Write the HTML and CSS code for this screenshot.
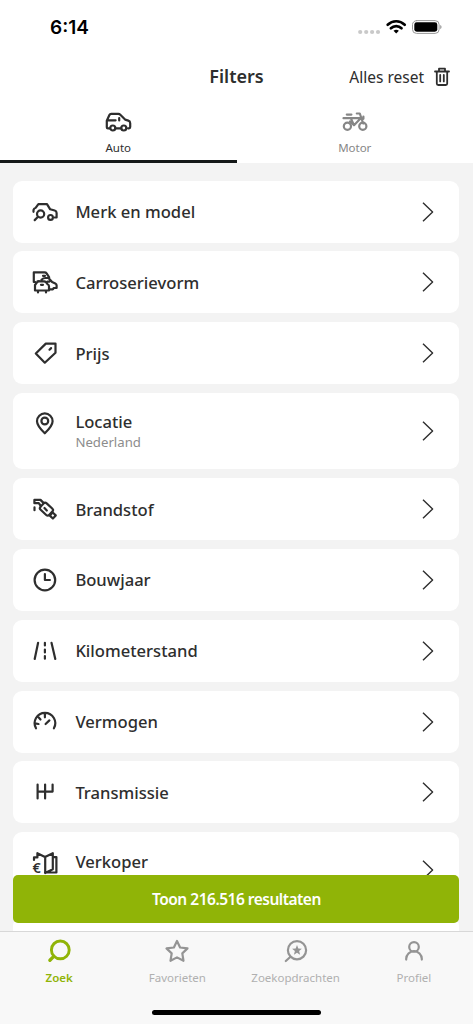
FILE: index.html
```html
<!DOCTYPE html>
<html lang="nl">
<head>
    <meta charset="UTF-8">
    <meta name="viewport" content="width=device-width, initial-scale=1.0">
    <title>Filters</title>
    <link rel="stylesheet" href="styles.css">
</head>
<body>
    <div class="app">
        <header class="header">
            <!-- Statusbalk -->
            <div class="status-bar">
                <span class="time">6:14</span>
                <svg class="status-icons" width="86" height="20" viewBox="0 0 86 20">
                    <g fill="#c9c9c9"><circle cx="4.2" cy="14" r="2.1"/><circle cx="10.2" cy="14" r="2.1"/><circle cx="16.1" cy="14" r="2.1"/><circle cx="22" cy="14" r="2.1"/></g>
                    <g fill="none" stroke="#000" stroke-width="2.7"><path d="M31.7 6.7a12.2 12.2 0 0 1 17 0"/><path d="M34.9 10.2a7.6 7.6 0 0 1 10.6 0"/></g>
                    <path d="M37.5 12.8a4.3 4.3 0 0 1 5.4 0L40.2 15.6z" fill="#000"/>
                    <rect x="56.5" y="2.6" width="26.6" height="12.8" rx="4" fill="none" stroke="#999" stroke-width="1"/>
                    <rect x="58.3" y="4.3" width="23" height="9.4" rx="2.4" fill="#000"/>
                    <path d="M84.3 7v4.2c1.6-.7 1.6-3.5 0-4.2z" fill="#888"/>
                </svg>
            </div>

            <div class="title-bar">
                <h1>Filters</h1>
                <button class="reset">
                    <span>Alles reset</span>
                    <svg width="16" height="20" viewBox="0 0 16 20"><path d="M1 4.5h14M5 4V1.7h6V4M2.8 5v11.6q0 1.4 1.4 1.4h7.6q1.4 0 1.4-1.4V5M6.2 8v6.4M9.8 8v6.4"/></svg>
                </button>
            </div>

            <nav class="vehicle-tabs">
                <a class="vehicle-tab active">
                    <svg width="28" height="22" viewBox="0 0 28 22"><path d="M6 17.3H3.9q-1.1 0-1.1-1.1V9.8L5.4 4q.5-1.1 1.8-1.1h7.2q1.1 0 1.9.8l4.8 4.9 3.2 1q1.9.6 1.9 2.6v3.9q0 1.2-1.2 1.2h-1M11.5 17.3h5.7M3.4 9.3h8.2M15.2 7v2.5"/><circle cx="8.8" cy="17" r="2.5"/><circle cx="19.8" cy="17" r="2.5"/></svg>
                    <span>Auto</span>
                </a>
                <a class="vehicle-tab">
                    <svg width="28" height="22" viewBox="0 0 28 22"><path d="M2.5 7.2h16.5M5.8 3.6h4.6M10 7.6l3 6.6 6-6.3M9 10.5l4 3.7M15.8 2.5h3l3.4 10M22.4 5.6v2.2"/><circle cx="6.4" cy="15.3" r="3.6"/><circle cx="21.8" cy="15.3" r="3.6"/></svg>
                    <span>Motor</span>
                </a>
            </nav>
        </header>

        <!-- Lijst met filters -->
        <main class="filters">
            <a class="card">
                <svg class="icon" viewBox="0 0 28 28"><path d="M2.5 13.8V12q.3-1.8 2.3-2.3L7.4 6.1H16l3.2 5.2 4.5 1.2q1.9.6 1.9 2.6v4.4h-2M7 18.8l-3.3 3.3"/><circle cx="9.6" cy="16" r="3.6"/><circle cx="19.5" cy="19.4" r="2.4"/></svg>
                <div class="text"><h2>Merk en model</h2></div>
                <svg class="chevron" viewBox="0 0 12 20"><path d="M1 .7 10.6 10 1 19.3"/></svg>
            </a>
            <a class="card">
                <svg class="icon" viewBox="0 0 28 28"><path d="M4.2 14H2.8V4.4h10.8q1.3 0 2 1l2.6 4M6.5 13.4l1.7-.4M10.5 11.8q1.8-1.8 4-1.8h3l3.6 4 3.2 1.4q1.3.6 1.3 1.9V20h-2.8l-1 1.4h-2.5M4 17l2-2.7q.7-1 1.9-1h5.2q1 0 1.8.8l1.6 2.1q1.5.5 1.5 2v4.3H4zM7 22.8v1.6M15 22.8v1.6M12 7.8h2M10 16.8h2M16.5 13.7h1.8"/></svg>
                <div class="text"><h2>Carroserievorm</h2></div>
                <svg class="chevron" viewBox="0 0 12 20"><path d="M1 .7 10.6 10 1 19.3"/></svg>
            </a>
            <a class="card">
                <svg class="icon" viewBox="0 0 28 28"><path d="M14.8 4.6h9.7v9.2L13.8 23.7l-9-9.2zM18.5 10.7l1.6-1.6"/></svg>
                <div class="text"><h2>Prijs</h2></div>
                <svg class="chevron" viewBox="0 0 12 20"><path d="M1 .7 10.6 10 1 19.3"/></svg>
            </a>
            <a class="card large">
                <svg class="icon" viewBox="0 0 28 28"><path d="M13.8 24.3C9.8 20.4 6 16.7 6 12.2a7.8 7.8 0 0 1 15.6 0c0 4.5-3.8 8.2-7.8 12.1z"/><circle cx="13.8" cy="12" r="3.4"/></svg>
                <div class="text"><h2>Locatie</h2><p>Nederland</p></div>
                <svg class="chevron" viewBox="0 0 12 20"><path d="M1 .7 10.6 10 1 19.3"/></svg>
            </a>
            <a class="card">
                <svg class="icon" viewBox="0 0 28 28"><path d="M3.4 8.2V4.9h6.1l3 3M3.6 8.2h4.2l2 2.8M3.5 12.4v2.8M13.5 13l2.3 2.5"/><rect x="9.5" y="9.6" width="12" height="8.8" rx="2.2" transform="rotate(43 15.3 14)"/><rect x="19.7" y="18.4" width="4.2" height="4.2" transform="rotate(43 21.8 20.5)"/></svg>
                <div class="text"><h2>Brandstof</h2></div>
                <svg class="chevron" viewBox="0 0 12 20"><path d="M1 .7 10.6 10 1 19.3"/></svg>
            </a>
            <a class="card">
                <svg class="icon" viewBox="0 0 28 28"><circle cx="13.9" cy="14" r="10.3"/><path d="M13.9 8v6h5"/></svg>
                <div class="text"><h2>Bouwjaar</h2></div>
                <svg class="chevron" viewBox="0 0 12 20"><path d="M1 .7 10.6 10 1 19.3"/></svg>
            </a>
            <a class="card">
                <svg class="icon" viewBox="0 0 28 28"><path d="M7.1 5.8 3.7 21.9M20.5 5.8l3.8 16.1M13.9 5.8v2.6M13.9 12.6v2.8M13.9 19v2.7"/></svg>
                <div class="text"><h2>Kilometerstand</h2></div>
                <svg class="chevron" viewBox="0 0 12 20"><path d="M1 .7 10.6 10 1 19.3"/></svg>
            </a>
            <a class="card">
                <svg class="icon" viewBox="0 0 28 28"><path d="M5 20.3a10.3 10.3 0 1 1 17.9 0M13.9 6v3.3M7.5 9.3l2 2.2M4 15.4l3.5.6M14.6 16l3.8-3.6"/></svg>
                <div class="text"><h2>Vermogen</h2></div>
                <svg class="chevron" viewBox="0 0 12 20"><path d="M1 .7 10.6 10 1 19.3"/></svg>
            </a>
            <a class="card">
                <svg class="icon" viewBox="0 0 28 28"><path d="M6.6 6.6v13.8M14.1 6.6v13.8M21.6 6.6v7H6.6"/></svg>
                <div class="text"><h2>Transmissie</h2></div>
                <svg class="chevron" viewBox="0 0 12 20"><path d="M1 .7 10.6 10 1 19.3"/></svg>
            </a>
            <a class="card large">
                <svg class="icon" viewBox="0 0 28 28"><path d="M3 11V8.4h3.4V4.2L14 8l7.8-3.8v16L14.2 24V8M22 8.1h3.4v15.4H14"/><text x="1.6" y="23.6">€</text></svg>
                <div class="text"><h2>Verkoper</h2></div>
                <svg class="chevron" viewBox="0 0 12 20"><path d="M1 .7 10.6 10 1 19.3"/></svg>
            </a>
            <a class="card"></a>
            <button class="show-results">Toon 216.516 resultaten</button>
        </main>

        <!-- Navigatie onderaan -->
        <footer class="bottom">
            <nav class="bottom-nav">
                <a class="nav-item active">
                    <svg width="28" height="28" viewBox="0 0 28 28"><circle cx="15.3" cy="12.9" r="8.9" stroke-width="2.9"/><path d="m8.8 19.4-3.9 3.8" stroke-width="3.4"/></svg>
                    <span>Zoek</span>
                </a>
                <a class="nav-item">
                    <svg width="28" height="28" viewBox="0 0 28 28"><path d="m14 4 3.1 6.5 7.4.9-5.2 5 1.2 7.4L14 20.4l-6.5 3.4 1.2-7.4-5.2-5 7.4-.9z"/></svg>
                    <span>Favorieten</span>
                </a>
                <a class="nav-item">
                    <svg width="28" height="28" viewBox="0 0 28 28"><circle cx="15" cy="13.2" r="9.1"/><path d="m8.5 19.7-4.7 4.3"/><path d="m15 8.1 1.3 3.5 3.6.2-2.8 2.3 1 3.6-3.1-2-3.1 2 1-3.6-2.8-2.3 3.6-.2z" fill="#949494" stroke="none"/></svg>
                    <span>Zoekopdrachten</span>
                </a>
                <a class="nav-item">
                    <svg width="28" height="28" viewBox="0 0 28 28"><circle cx="14" cy="9.9" r="4.8"/><path d="M6.2 22.6v-.8a7.8 7.6 0 0 1 15.6 0v.8"/></svg>
                    <span>Profiel</span>
                </a>
            </nav>
            <div class="home-indicator"></div>
        </footer>
    </div>
</body>
</html>
```
FILE: styles.css
```css
* {
    box-sizing: border-box;
}

body {
    margin: 0;
    font-family: 'Noto Sans', 'Open Sans', sans-serif;
    background-color: #f3f3f3;
    color: #2e2e2e;
}

h1, h2, p {
    margin: 0;
}

button {
    border: 0;
    padding: 0;
    background: none;
    font-family: inherit;
    color: inherit;
}

svg {
    display: block;
    flex: none;
    fill: none;
    stroke: currentColor;
    stroke-width: 2.2;
    stroke-linecap: round;
    stroke-linejoin: round;
}

.app {
    display: flex;
    flex-direction: column;
    width: 473px;
    height: 1024px;
    overflow: hidden;
}

/* Bovenkant */
.header {
    flex: none;
    height: 163px;
    background-color: #fff;
}

.status-bar {
    display: flex;
    justify-content: space-between;
    align-items: center;
    height: 54px;
    padding: 0 31px 0 50px;
}

.time {
    font-family: 'Inter', sans-serif;
    font-size: 19px;
    font-weight: 600;
    color: #000;
}

.status-icons {
    stroke: none;
    margin-top: 2px;
}

.title-bar {
    display: grid;
    grid-template-columns: 1fr auto 1fr;
    align-items: center;
    height: 45px;
    padding: 0 23px;
}

h1 {
    grid-column: 2;
    padding-bottom: 1px;
    font-size: 18px;
    font-weight: 600;
}

.reset {
    display: flex;
    justify-content: flex-end;
    align-items: center;
    gap: 10px;
    font-size: 15.5px;
}

.reset svg {
    stroke-width: 1.8;
}

.vehicle-tabs {
    display: flex;
    height: 64px;
}

.vehicle-tab {
    flex: 1;
    display: flex;
    flex-direction: column;
    align-items: center;
    gap: 7px;
    padding-top: 12px;
    border-bottom: 3px solid transparent;
    font-size: 11.5px;
    line-height: 16px;
    color: #868686;
}

.vehicle-tab.active {
    border-bottom-color: #141818;
    color: #2e2e2e;
}

/* Filters */
.filters {
    position: relative;
    flex: 1;
    min-height: 0;
    display: flex;
    flex-direction: column;
    gap: 8.8px;
    padding: 17.6px 13.6px 0 13.4px;
    overflow: hidden;
}

.card {
    flex: none;
    display: flex;
    align-items: center;
    height: 62px;
    padding: 0 25.6px 0 17.2px;
    border-radius: 9px;
    background-color: #fff;
}

.card.large {
    height: 76.4px;
}

.icon {
    width: 28px;
    height: 28px;
    margin-right: 16.8px;
}

.icon text {
    font-family: 'Noto Sans', sans-serif;
    font-size: 14.5px;
    font-weight: 600;
    fill: currentColor;
    stroke: none;
}

.card.large .icon,
.card.large .text {
    align-self: flex-start;
    margin-top: 16.4px;
}

.text {
    flex: 1;
}

h2 {
    font-size: 16.6px;
    font-weight: 500;
    line-height: 25px;
}

p {
    font-size: 13.2px;
    line-height: 16px;
    color: #8c8c8c;
}

.chevron {
    width: 12px;
    height: 20px;
    stroke-width: 1.4;
    stroke-linecap: butt;
}

/* Knop boven de lijst */
.show-results {
    position: absolute;
    left: 13.4px;
    right: 13.6px;
    bottom: 8px;
    height: 48.5px;
    border-radius: 5px;
    background-color: #90b407;
    color: #fff;
    font-size: 15.5px;
    font-weight: 600;
    letter-spacing: -0.5px;
}

/* Onderbalk */
.bottom {
    flex: none;
    display: flex;
    flex-direction: column;
    justify-content: space-between;
    align-items: center;
    height: 93px;
    padding-bottom: 9px;
    border-top: 1px solid #d8d8d8;
    background-color: #f8f8f8;
}

.bottom-nav {
    display: flex;
    width: 100%;
}

.nav-item {
    flex: 1;
    display: flex;
    flex-direction: column;
    align-items: center;
    gap: 5px;
    padding-top: 5px;
    font-size: 11.5px;
    line-height: 16px;
    color: #b0b0b0;
}

.nav-item svg {
    color: #949494;
}

.nav-item.active,
.nav-item.active svg {
    color: #90b407;
    font-weight: 600;
}

.home-indicator {
    width: 169px;
    height: 5.5px;
    border-radius: 3px;
    background-color: #000;
}
```
